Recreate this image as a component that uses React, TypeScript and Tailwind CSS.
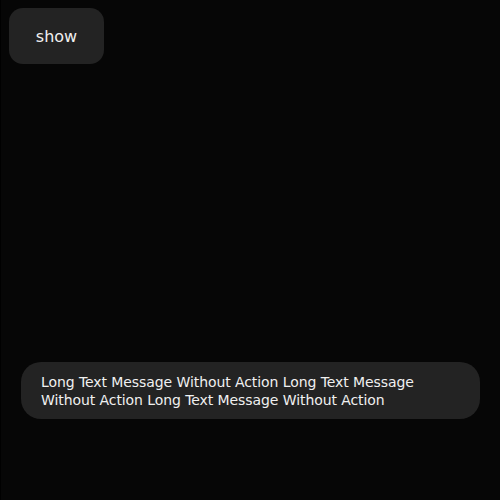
import React from "react";

export default function App() {
  return (
    <div
      className="flex h-[500px] w-[500px] flex-col border-l border-black bg-[#060606] text-white"
      style={{ fontFamily: '"DejaVu Sans", sans-serif' }}
    >
      {/* Top action */}
      <div className="pl-2 pt-2">
        <button className="flex h-[56px] w-[95px] items-center justify-center rounded-[14px] bg-[#232323] pt-[1px] text-[16px] text-[#f0f0f0]">
          show
        </button>
      </div>

      <div className="flex-1" />

      {/* Toast */}
      <div className="mb-[81px] ml-5 mr-5 flex h-[57px] items-center rounded-[20px] bg-[#232323] px-5">
        <p className="text-[14px] leading-[18px] tracking-[-0.08px] text-[#f0f0f0]">
          Long Text Message Without Action Long Text Message Without Action Long Text Message Without Action
        </p>
      </div>
    </div>
  );
}
